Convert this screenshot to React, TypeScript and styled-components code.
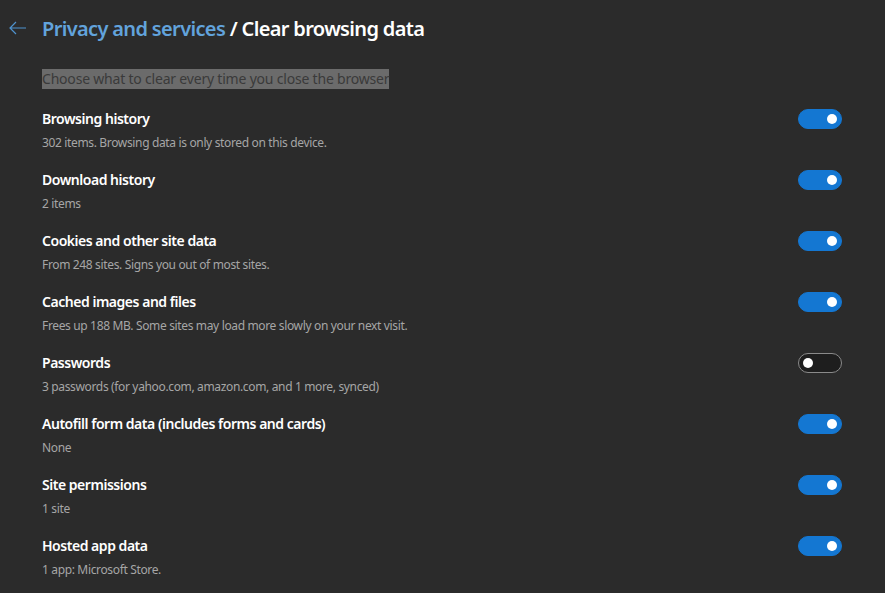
import { createGlobalStyle } from "styled-components";
import styled from "styled-components";

const items: { title: string; desc: string; on: boolean }[] = [
  { title: "Browsing history", desc: "302 items. Browsing data is only stored on this device.", on: true },
  { title: "Download history", desc: "2 items", on: true },
  { title: "Cookies and other site data", desc: "From 248 sites. Signs you out of most sites.", on: true },
  { title: "Cached images and files", desc: "Frees up 188 MB. Some sites may load more slowly on your next visit.", on: true },
  { title: "Passwords", desc: "3 passwords (for yahoo.com, amazon.com, and 1 more, synced)", on: false },
  { title: "Autofill form data (includes forms and cards)", desc: "None", on: true },
  { title: "Site permissions", desc: "1 site", on: true },
  { title: "Hosted app data", desc: "1 app: Microsoft Store.", on: true },
];

export default function App() {
  return (
    <>
      <GlobalStyle />
      <Page>
        <Header>
          <BackButton aria-label="Back">
            <svg width="18" height="14" viewBox="0 0 18 14" fill="none">
              <path d="M7 1L1 7l6 6M1 7h16" stroke="#4f93cf" strokeWidth="1.2" />
            </svg>
          </BackButton>
          <Title>
            <Crumb>Privacy and services</Crumb> / Clear browsing data
          </Title>
        </Header>
        <Content>
          <Subtitle>
            <Highlight>Choose what to clear every time you close the browser</Highlight>
          </Subtitle>
          {items.map((it) => (
            <Row key={it.title}>
              <Text>
                <RowTitle>{it.title}</RowTitle>
                <RowDesc>{it.desc}</RowDesc>
              </Text>
              <Toggle $on={it.on}>
                <Knob />
              </Toggle>
            </Row>
          ))}
        </Content>
      </Page>
    </>
  );
}

const GlobalStyle = createGlobalStyle`
  html, body {
    margin: 0;
    background: #2b2b2b;
    font-family: "Noto Sans", "Open Sans", sans-serif;
  }
`;

const Page = styled.div`
  width: 885px;
  height: 593px;
  overflow: hidden;
  background: #2b2b2b;
`;

const Header = styled.div`
  display: flex;
  align-items: center;
  height: 56px;
  padding-left: 8px;
`;

const BackButton = styled.div`
  display: flex;
  align-items: center;
  justify-content: center;
  width: 20px;
  height: 20px;
  margin-right: 14px;
`;

const Title = styled.h1`
  margin: 0;
  font-size: 20px;
  font-weight: 600;
  color: #ffffff;
  letter-spacing: -0.65px;
`;

const Crumb = styled.span`
  color: #62a3dc;
`;

const Content = styled.div`
  padding: 11px 43px 0 42px;
`;

const Subtitle = styled.div`
  height: 20px;
  margin-bottom: 22px;
`;

const Highlight = styled.span`
  display: inline-block;
  height: 20px;
  line-height: 20px;
  background: #6b6b6b;
  color: #3a3a3a;
  font-size: 14px;
  letter-spacing: -0.2px;
`;

const Row = styled.div`
  display: flex;
  align-items: flex-start;
  justify-content: space-between;
  height: 61px;
`;

const Text = styled.div`
  display: flex;
  flex-direction: column;
`;

const RowTitle = styled.div`
  font-size: 14px;
  font-weight: 600;
  color: #ffffff;
  line-height: 20px;
  letter-spacing: -0.47px;
`;

const RowDesc = styled.div`
  margin-top: 6px;
  font-size: 12px;
  color: #a6a6a6;
  line-height: 16px;
  letter-spacing: -0.35px;
`;

const Toggle = styled.div<{ $on: boolean }>`
  box-sizing: border-box;
  display: flex;
  align-items: center;
  width: 44px;
  height: 20px;
  border-radius: 10px;
  padding: 0 4px;
  background: ${(p) => (p.$on ? "#1477d2" : "#1e1e1e")};
  border: 1px solid ${(p) => (p.$on ? "#1477d2" : "#8a8a8a")};
  justify-content: ${(p) => (p.$on ? "flex-end" : "flex-start")};
`;

const Knob = styled.div`
  width: 10px;
  height: 10px;
  border-radius: 50%;
  background: #ffffff;
`;
